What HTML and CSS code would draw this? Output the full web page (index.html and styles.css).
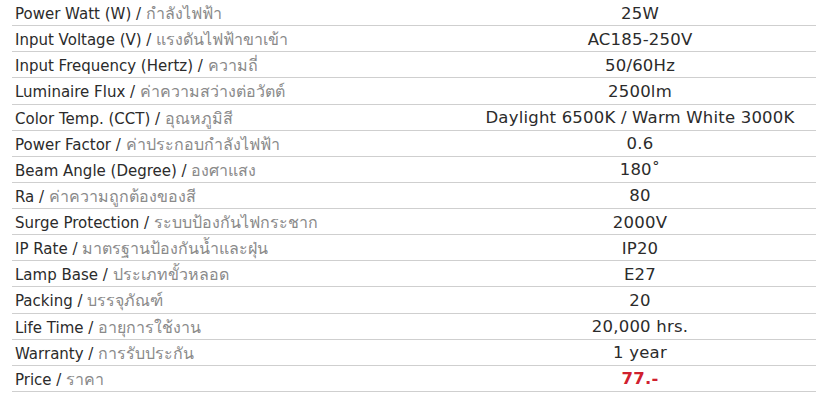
FILE: index.html
```html
<!DOCTYPE html>
<html lang="th">
<head>
<meta charset="utf-8">
<link rel="stylesheet" href="styles.css">
</head>
<body>
<div class="specs">
  <div class="row"><div class="label">Power Watt (W) / <span class="th">กำลังไฟฟ้า</span></div><div class="value">25W</div></div>
  <div class="row"><div class="label">Input Voltage (V) / <span class="th">แรงดันไฟฟ้าขาเข้า</span></div><div class="value">AC185-250V</div></div>
  <div class="row"><div class="label">Input Frequency (Hertz) / <span class="th">ความถี่</span></div><div class="value">50/60Hz</div></div>
  <div class="row"><div class="label">Luminaire Flux / <span class="th">ค่าความสว่างต่อวัตต์</span></div><div class="value">2500lm</div></div>
  <div class="row"><div class="label">Color Temp. (CCT) / <span class="th">อุณหภูมิสี</span></div><div class="value">Daylight 6500K / Warm White 3000K</div></div>
  <div class="row"><div class="label">Power Factor / <span class="th">ค่าประกอบกำลังไฟฟ้า</span></div><div class="value">0.6</div></div>
  <div class="row"><div class="label">Beam Angle (Degree) / <span class="th">องศาแสง</span></div><div class="value">180˚</div></div>
  <div class="row"><div class="label">Ra / <span class="th">ค่าความถูกต้องของสี</span></div><div class="value">80</div></div>
  <div class="row"><div class="label">Surge Protection / <span class="th">ระบบป้องกันไฟกระชาก</span></div><div class="value">2000V</div></div>
  <div class="row"><div class="label">IP Rate / <span class="th">มาตรฐานป้องกันน้ำและฝุ่น</span></div><div class="value">IP20</div></div>
  <div class="row"><div class="label">Lamp Base / <span class="th">ประเภทขั้วหลอด</span></div><div class="value">E27</div></div>
  <div class="row"><div class="label">Packing / <span class="th">บรรจุภัณฑ์</span></div><div class="value">20</div></div>
  <div class="row"><div class="label">Life Time / <span class="th">อายุการใช้งาน</span></div><div class="value">20,000 hrs.</div></div>
  <div class="row"><div class="label">Warranty / <span class="th">การรับประกัน</span></div><div class="value">1 year</div></div>
  <div class="row"><div class="label">Price / <span class="th">ราคา</span></div><div class="value price">77.-</div></div>
</div>
</body>
</html>
```
FILE: styles.css
```css
html, body {
  margin: 0;
  padding: 0;
  background: #ffffff;
}
body {
  font-family: "DejaVu Sans", "Noto Sans", sans-serif;
  color: #2b2b2b;
}
.specs {
  margin-left: 12px;
  width: 804px;
  display: flex;
  flex-direction: column;
}
.row {
  display: grid;
  grid-template-columns: 452px 1fr;
  height: 26.14px;
  box-sizing: border-box;
  padding-top: 2px;
  border-bottom: 1.5px solid #cfcfcf;
  align-items: center;
  font-size: 15px;
  line-height: 20px;
}
.label {
  padding-left: 3px;
  white-space: nowrap;
}
.th {
  color: #8a8a8a;
  font-family: "Open Sans", "Noto Sans", sans-serif;
  font-size: 16px;
}
.value {
  text-align: center;
  white-space: nowrap;
  font-size: 16.5px;
  letter-spacing: 0.2px;
}
.price {
  color: #d0202e;
  font-weight: 700;
}
```
